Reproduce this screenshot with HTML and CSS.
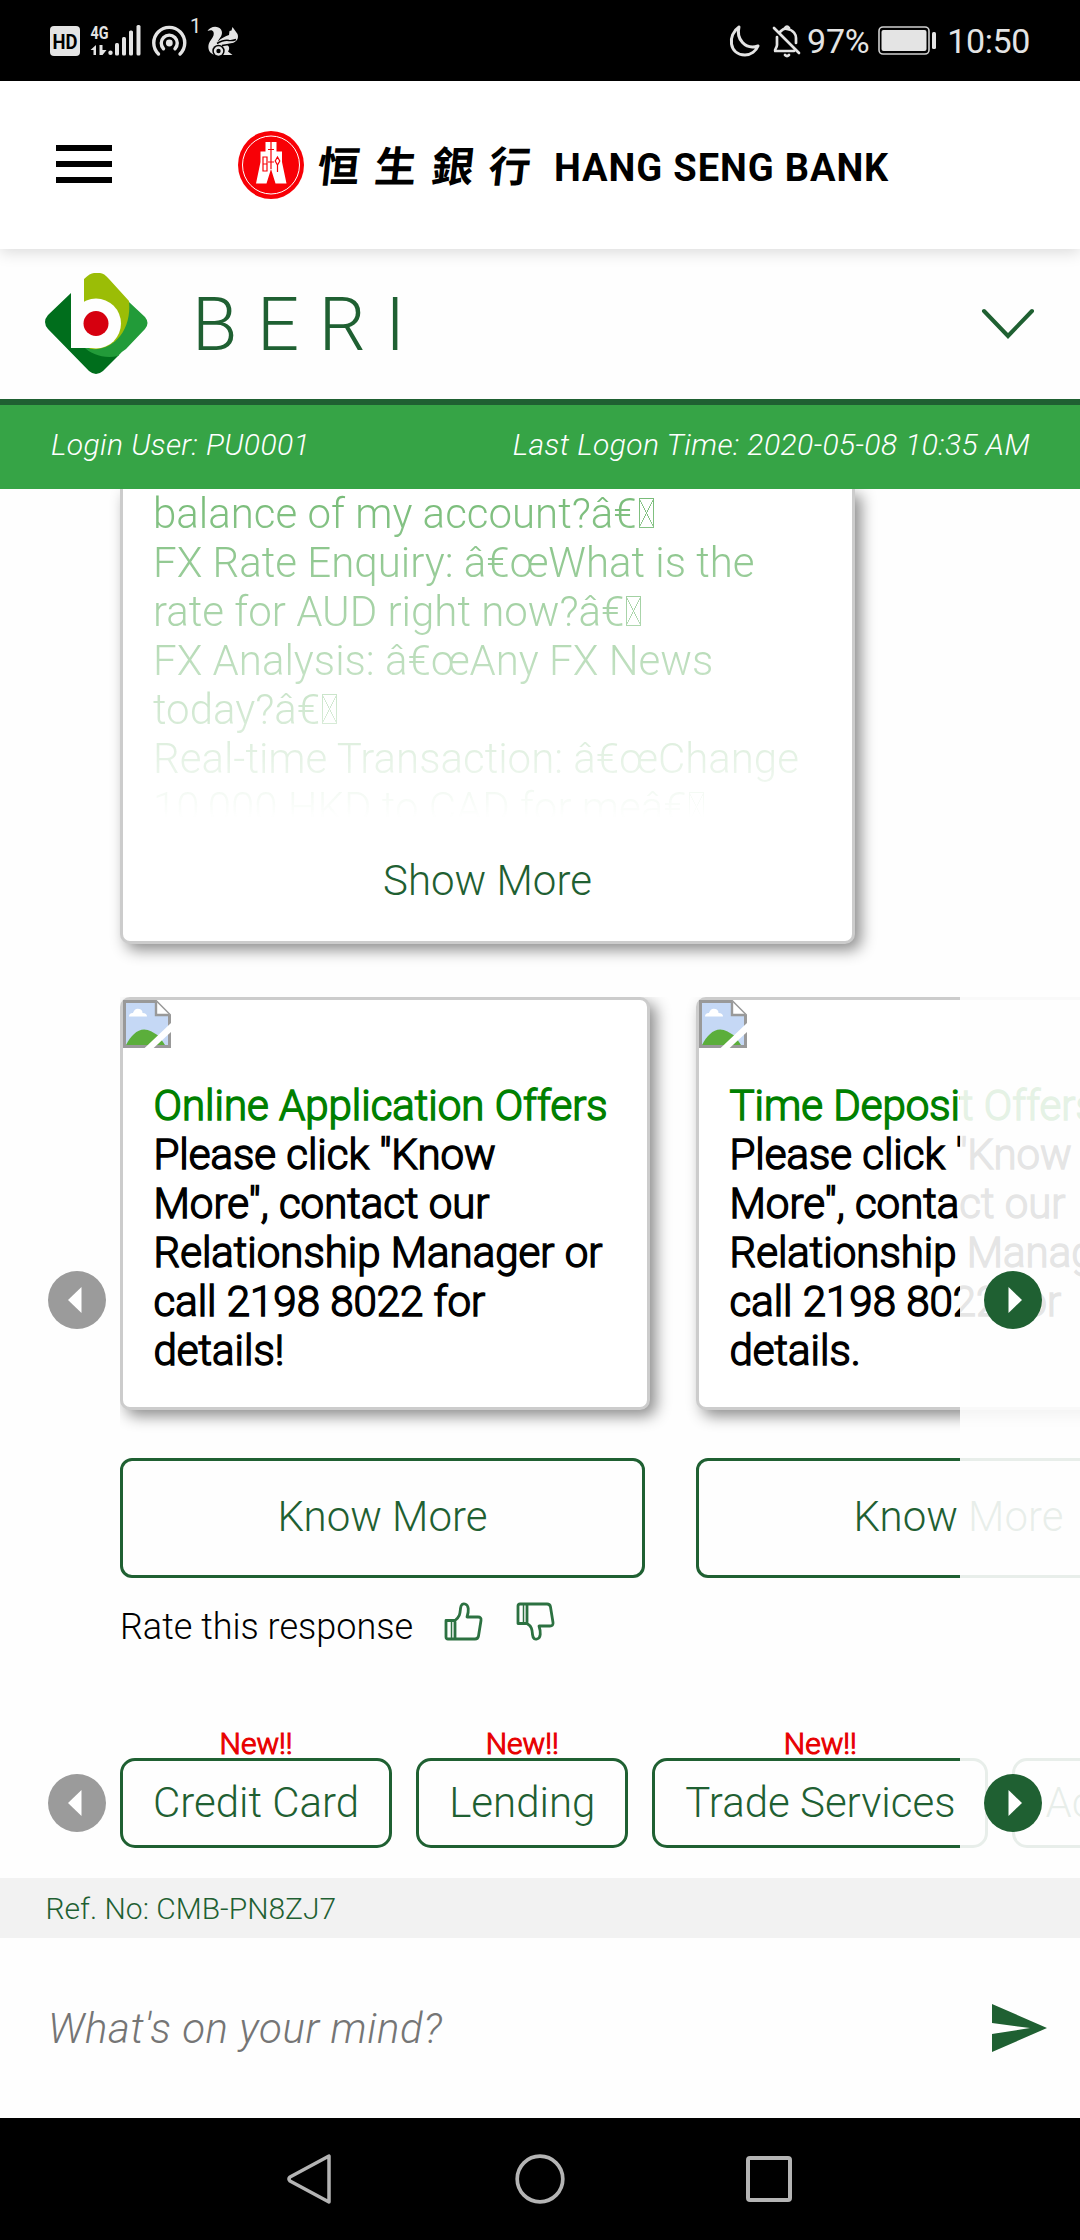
FILE: index.html
```html
<!DOCTYPE html>
<html lang="en">
<head>
<meta charset="utf-8">
<title>BERI - Hang Seng Bank</title>
<link rel="stylesheet" href="styles.css">
</head>
<body>
<div class="screen">
  <div class="status">
    <svg class="status-left" width="200" height="81" viewBox="0 0 200 81" fill="#e4e4e4">
      <rect x="0" y="26" width="30" height="30" rx="4"/>
      <text x="15" y="48.500" class="hd" text-anchor="middle" textLength="25" lengthAdjust="spacingAndGlyphs">HD</text>
      <text x="40.500" y="38.500" class="net" textLength="18" lengthAdjust="spacingAndGlyphs">4G</text>
      <path d="M40.500 50l5.500-5v10h-2.500v-5zM49.500 45v10h3l4-5h-4v-5z"/>
      <g><circle cx="60.500" cy="52.700" r="2.200"/><rect x="65" y="43" width="4" height="12.500" rx="1.500"/><rect x="72" y="37" width="4" height="18.500" rx="1.500"/><rect x="79" y="30.500" width="4" height="25" rx="1.500"/><rect x="86.500" y="25" width="4" height="30.500" rx="1.500"/></g>
      <g fill="none" stroke="#e4e4e4" stroke-width="3.400" stroke-linecap="round"><path d="M108.500 54a15.500 15.500 0 1 1 21.500 0"/><path d="M113.500 48.700a8 8 0 1 1 11.500 0"/></g>
      <circle cx="119.300" cy="43" r="3.400"/>
      <text x="140" y="33" class="one">1</text>
      <path d="M157.500 31C160 26 168 25 171 29.500c3 5-1.500 8.500-3.500 12.500 4-4 8-6 11.500-7l.5-4 2-.5 1-3.500 5 7c1.500 4-.5 7-3.500 8.500-3 1.500-5 1.500-8 1.500 3.500 2 4 5 2 7.500l4.500 3.500h-15c-6 .5-10-4-9-10 1-5 6.500-8 5-13-1-2.500-3.500-2-6-1z"/>
      <circle cx="168.500" cy="51" r="6.200" fill="#000"/><circle cx="168.500" cy="51" r="4.700"/><circle cx="168.500" cy="51" r="2.200" fill="#000"/>
      <path d="M167 43.500q7-4 12-3 3 .5 7-1M172 45.500q6-1 14-2" stroke="#000" stroke-width="1.500" fill="none"/>
    </svg>
    <div class="status-right">
      <svg width="78" height="40" viewBox="0 0 78 40" fill="none" stroke="#e4e4e4" stroke-width="3" stroke-linejoin="round" stroke-linecap="round">
        <path d="M11 6C-1 14 1 34 17 34c6 0 11-4 13-9C17 29 8 18 11 6z"/>
        <path d="M46 7l25 25M49 16v8c0 3-3 5-2 6h19M52 11l1-1c2-2 4-3 6-2 7 1 9 6 9 9v5" stroke-width="2.700"/><path d="M57 7q2-3 4 0M57 34q2 2 4 0" stroke-width="2.700"/>
      </svg>
      <span class="pct">97%</span>
      <svg class="battery" width="59" height="30" viewBox="0 0 59 30"><rect x="1" y="1" width="50" height="27" rx="4" fill="none" stroke="#d0d0d0" stroke-width="1.600"/><rect x="3.500" y="4" width="45" height="21" rx="2" fill="#e4e4e4"/><rect x="54" y="6" width="4" height="17" rx="1.500" fill="#e4e4e4"/></svg>
      <span class="clock">10:50</span>
    </div>
  </div>
  <header class="bank">
    <div class="burger"><i></i><i></i><i></i></div>
    <svg class="seal" width="66" height="68" viewBox="0 0 66 68"><ellipse cx="33" cy="34" rx="33" ry="34" fill="#f80006"/><ellipse cx="33" cy="34" rx="28.500" ry="29" fill="none" stroke="#fff" stroke-width="1"/><path d="M27.500 11h11v9.500h5.500V31l4.500 21.500H37.500L33 38l-4.500 14.500H18L22.500 31V20.500h5z" fill="#fff"/><path d="M33 11v27M30 18.500h6M30 31h6M25 26h4v14h-4zM25 33h4M39.500 26l2.300 4-2.300 4-2.300-4zM39.500 34v7" fill="none" stroke="#f80006" stroke-width="1.200"/></svg>
    <span class="bank-cn">恒生銀行</span>
    <span class="bank-en">HANG SENG BANK</span>
  </header>
  <div class="beri">
    <svg class="beri-logo" width="103" height="102" viewBox="0 0 103 102">
      <path d="M26 20L3 42q-6 7 0 14l41 42q7 6 14 0l16-16-28-10H26z" fill="#006e1c"/>
      <path d="M84 29l16 15q5 6 0 12L81 76q-5 3-8 7C60 86 46 82 38 73l30-10z" fill="#229b39"/>
      <path d="M39 6q6-6 10-6h6q4 0 9 6l20 22C87 58 68 78 46 76L39 73z" fill="#9bbd06"/>
      <path d="M26 0h13v30l-4 44H26z" fill="#fefefe"/>
      <circle cx="51" cy="50.500" r="25" fill="#fefefe"/><path d="M26 50h20v25H26z" fill="#fefefe"/><circle cx="51" cy="50.500" r="12.500" fill="#d6000f"/>
    </svg>
    <span class="beri-name">BERI</span>
    <svg class="chev" width="54" height="32" viewBox="0 0 54 32"><path d="M3 3l24 25L51 3" fill="none" stroke="#1f6032" stroke-width="4" stroke-linecap="round"/></svg>
  </div>
  <div class="login"><span class="who">Login User: PU0001</span><span class="when">Last Logon Time: 2020-05-08 10:35 AM</span></div>

  <main class="chat">
    <section class="answer">
      <div class="fading">balance of my account?â€<i class="tofu"></i><br>FX Rate Enquiry: â€œWhat is the<br>rate for AUD right now?â€<i class="tofu"></i><br>FX Analysis: â€œAny FX News<br>today?â€<i class="tofu"></i><br>Real-time Transaction: â€œChange<br>10,000 HKD to CAD for meâ€<i class="tofu"></i></div>
      <div class="show">Show More</div>
    </section>

    <section class="offers">
      <div class="track">
        <article class="offer">
          <div class="card">
            <svg class="broken" width="48" height="48" viewBox="0 0 16 16"><path d="M.5.500h10.500L15.500 5v10.500H.5z" fill="#c5d8f5" stroke="#999"/><path d="M11 .5V5h4.500" fill="#fff" stroke="#999" stroke-width=".8"/><path d="M2 5.500q0-1.200 1.300-1.200Q4 2.500 5.500 3q1 .3 1 1.300 1.500 0 1.500 1.200z" fill="#fff"/><path d="M1 15c2-4 5-6.500 8.500-4.500L12 12l2 3z" fill="#5bae3b"/><path d="M7 16.200L16.200 7.500v3L10 16.200z" fill="#fff"/></svg>
            <div class="copy"><span class="offer-title">Online Application Offers</span><br>Please click "Know<br>More", contact our<br>Relationship Manager or<br>call 2198 8022 for<br>details!</div>
          </div>
          <div class="know">Know More</div>
        </article>
        <article class="offer">
          <div class="card">
            <svg class="broken" width="48" height="48" viewBox="0 0 16 16"><path d="M.5.500h10.500L15.500 5v10.500H.5z" fill="#c5d8f5" stroke="#999"/><path d="M11 .5V5h4.500" fill="#fff" stroke="#999" stroke-width=".8"/><path d="M2 5.500q0-1.200 1.300-1.200Q4 2.500 5.500 3q1 .3 1 1.300 1.500 0 1.500 1.200z" fill="#fff"/><path d="M1 15c2-4 5-6.500 8.500-4.500L12 12l2 3z" fill="#5bae3b"/><path d="M7 16.200L16.200 7.500v3L10 16.200z" fill="#fff"/></svg>
            <div class="copy"><span class="offer-title">Time Deposit Offers</span><br>Please click "Know<br>More", contact our<br>Relationship Manager or<br>call 2198 8022 for<br>details.</div>
          </div>
          <div class="know">Know More</div>
        </article>
      </div>
      <div class="veil"></div>
      <svg class="arrow prev" width="58" height="58" viewBox="0 0 58 58"><circle cx="29" cy="29" r="29" fill="#9b9b9b"/><path d="M33.500 16v26L20 29z" fill="#fff"/></svg>
      <svg class="arrow next" width="58" height="58" viewBox="0 0 58 58"><circle cx="29" cy="29" r="29" fill="#1f6032"/><path d="M24.500 16v26L38 29z" fill="#fff"/></svg>
    </section>

    <div class="rate"><span>Rate this response</span>
      <svg width="39" height="39" viewBox="0 0 39 39" fill="none" stroke="#2c7141" stroke-width="2.800" stroke-linejoin="round"><path d="M2 18.500h9V37H4q-2 0-2-2zM11 18.500c5-4 5-7 5.500-12C17 2 19 1.500 21 2c4 1 4 7 2 13h11q3.500 0 3 3.500l-2.500 15.500q-.5 3-3.500 3H11"/><path d="M7.500 18.500V37" stroke-width="1.500"/></svg>
      <svg width="39" height="39" viewBox="0 0 39 39" fill="none" stroke="#2c7141" stroke-width="2.800" stroke-linejoin="round"><path d="M2 21.500h9V2H4Q2 2 2 4zM11 21.500c5 3 5 6 5.500 11 .5 4.500 2.500 5 4.500 4.500 4-1 4-7 2-13h11q3.500 0 3-3.500L34.500 5Q34 2 31 2H11"/><path d="M7.500 21.500V2" stroke-width="1.500"/></svg>
    </div>

    <section class="topics">
      <div class="chips">
        <div class="topic"><b>New!!</b><span>Credit Card</span></div>
        <div class="topic"><b>New!!</b><span>Lending</span></div>
        <div class="topic"><b>New!!</b><span>Trade Services</span></div>
        <div class="topic"><b></b><span>Account Services</span></div>
      </div>
      <div class="veil"></div>
      <svg class="arrow prev" width="58" height="58" viewBox="0 0 58 58"><circle cx="29" cy="29" r="29" fill="#9b9b9b"/><path d="M33.500 16v26L20 29z" fill="#fff"/></svg>
      <svg class="arrow next" width="58" height="58" viewBox="0 0 58 58"><circle cx="29" cy="29" r="29" fill="#1f6032"/><path d="M24.500 16v26L38 29z" fill="#fff"/></svg>
    </section>
  </main>

  <div class="ref">Ref. No: CMB-PN8ZJ7</div>
  <div class="ask"><span>What's on your mind?</span><svg width="55" height="48" viewBox="0 0 55 48"><path d="M0 0l55 24L0 48V30l38-6L0 19z" fill="#1f6032"/></svg></div>
  <nav class="nav">
    <svg width="44" height="50" viewBox="0 0 44 50"><path d="M42 2v46L3 27q-2-2 0-4z" fill="none" stroke="#b4b4b4" stroke-width="3.500" stroke-linejoin="round"/></svg>
    <svg width="50" height="50" viewBox="0 0 50 50"><circle cx="25" cy="25" r="22.800" fill="none" stroke="#b4b4b4" stroke-width="3.700"/></svg>
    <svg width="46" height="46" viewBox="0 0 46 46"><rect x="2" y="2" width="42" height="42" rx="2" fill="none" stroke="#b4b4b4" stroke-width="4"/></svg>
  </nav>
</div>
</body>
</html>
```
FILE: styles.css
```css
* { box-sizing: border-box; }
body { margin: 0; background: #fff; font-family: Roboto, "Noto Sans CJK TC", sans-serif; font-weight: 300; }
svg { display: block; flex: none; }
.screen { width: 1080px; height: 2240px; display: flex; flex-direction: column; overflow: hidden; background: #fefefe; }
.screen > * { flex: none; }

.status { height: 81px; background: #000; color: #e4e4e4; display: flex; justify-content: space-between; padding: 0 50px; }
.hd { font: 700 20px Roboto, sans-serif; fill: #000; }
.net { font: 700 19px Roboto, sans-serif; }
.one { font: 400 20px Roboto, sans-serif; }
.status-right { display: flex; align-items: center; font-size: 34px; font-weight: 400; }
.pct { margin-left: 1px; letter-spacing: -.3px; }
.clock { letter-spacing: -.4px; }
.battery { margin: 0 10px 0 9px; }

.bank { height: 168px; background: #fff; display: flex; align-items: center; padding-left: 56px; position: relative; box-shadow: 0 3px 15px rgba(0,0,0,.15); white-space: nowrap; }
.burger { width: 56px; display: flex; flex-direction: column; gap: 10px; margin-right: 126px; padding-bottom: 2px; }
.burger i { height: 6px; background: #000; }
.bank-cn { font-family: "Noto Sans CJK TC", sans-serif; font-size: 42px; font-weight: 700; letter-spacing: 15px; margin-left: 14px; line-height: 60px; padding-bottom: 3px; transform: skewX(-6deg); }
.bank-en { font-size: 38px; font-weight: 700; letter-spacing: .9px; margin-left: 8px; padding-top: 5px; }

.beri { height: 156px; border-bottom: 6px solid #1f6032; display: flex; align-items: center; padding: 0 45px 0 45px; color: #1f6032; }
.beri-name { font-size: 74px; letter-spacing: 19.600px; margin-left: 44px; line-height: 87px; }
.chev { margin-left: auto; }
.login { height: 84px; background: #36a446; color: #fff; display: flex; justify-content: space-between; align-items: center; padding: 0 50px 5px 51px; font-size: 30px; font-style: italic; letter-spacing: .43px; }

.chat { height: 1389px; display: flex; flex-direction: column; overflow: hidden; }
.answer { width: 735px; height: 455px; margin-left: 120px; border: 3px solid #ccc; border-top: 0; border-radius: 0 0 10px 10px; background: #fff; box-shadow: 6px 6px 15px rgba(0,0,0,.45); font-size: 42px; line-height: 49px; flex: none; }
.fading { height: 329px; overflow: hidden; padding-left: 30px; color: green; white-space: nowrap; -webkit-mask-image: linear-gradient(rgba(0,0,0,.54), transparent); mask-image: linear-gradient(rgba(0,0,0,.54), transparent); }
.tofu { display: inline-block; width: 15px; height: 30px; margin-left: 2px; border: 1.500px solid green; background: linear-gradient(63deg, transparent 48%, green 49%, green 51%, transparent 52%), linear-gradient(-63deg, transparent 48%, green 49%, green 51%, transparent 52%); }
.show { text-align: center; color: #1f6032; margin-top: 38px; }

.offers { position: relative; height: 581px; margin-top: 53px; flex: none; }
.track { margin-left: 120px; height: 581px; display: flex; gap: 46px; overflow: hidden; white-space: nowrap; }
.offer { width: 530px; flex: none; display: flex; flex-direction: column; gap: 48px; }
.card { height: 413px; border: 3px solid #ccc; border-radius: 10px; background: #fff; box-shadow: 6px 6px 15px rgba(0,0,0,.45); }
.copy { font-size: 42px; line-height: 49px; padding: 33px 0 0 30.500px; -webkit-text-stroke: 1.500px currentColor; }
.offer-title { color: green; }
.know { width: 525px; height: 120px; border: 3px solid #1f6032; border-radius: 12px; color: #1f6032; font-size: 42px; line-height: 112px; text-align: center; }
.veil { position: absolute; left: 960px; right: 0; top: 0; bottom: 0; background: rgba(254,254,254,.9); }
.arrow { position: absolute; }
.prev { left: 47.500px; }
.next { left: 984px; }
.offers .arrow { top: 274px; }

.rate { height: 62px; margin-left: 120px; display: flex; font-size: 36px; padding-top: 24px; flex: none; }
.rate span { width: 324px; line-height: 50px; }
.rate svg { margin-right: 33px; }

.topics { position: relative; height: 128px; margin-top: 80px; flex: none; }
.chips { margin-left: 120px; display: flex; gap: 24px; overflow: hidden; white-space: nowrap; }
.topic { flex: none; display: flex; flex-direction: column; text-align: center; }
.topic b { height: 38px; line-height: 47px; font-size: 30px; font-weight: 300; color: #e80000; -webkit-text-stroke: 1.100px #e80000; }
.topic span { height: 90px; border: 3px solid #1f6032; border-radius: 15px; color: #1f6032; font-size: 42px; line-height: 84px; padding: 0 30px; }
.topics .arrow { top: 54px; }

.ref { height: 60px; background: #f2f2f2; color: #1f6032; font-size: 30px; line-height: 61px; padding-left: 45.500px; }
.ask { height: 180px; display: flex; justify-content: space-between; align-items: center; padding: 0 33px 0 48px; color: #757575; font-size: 42px; font-style: italic; letter-spacing: .6px; }
.nav { height: 122px; background: #000; display: flex; align-items: center; padding-left: 287px; }
.nav svg + svg { margin-left: 184px; }
.nav svg:last-child { margin-left: 181px; }
```
